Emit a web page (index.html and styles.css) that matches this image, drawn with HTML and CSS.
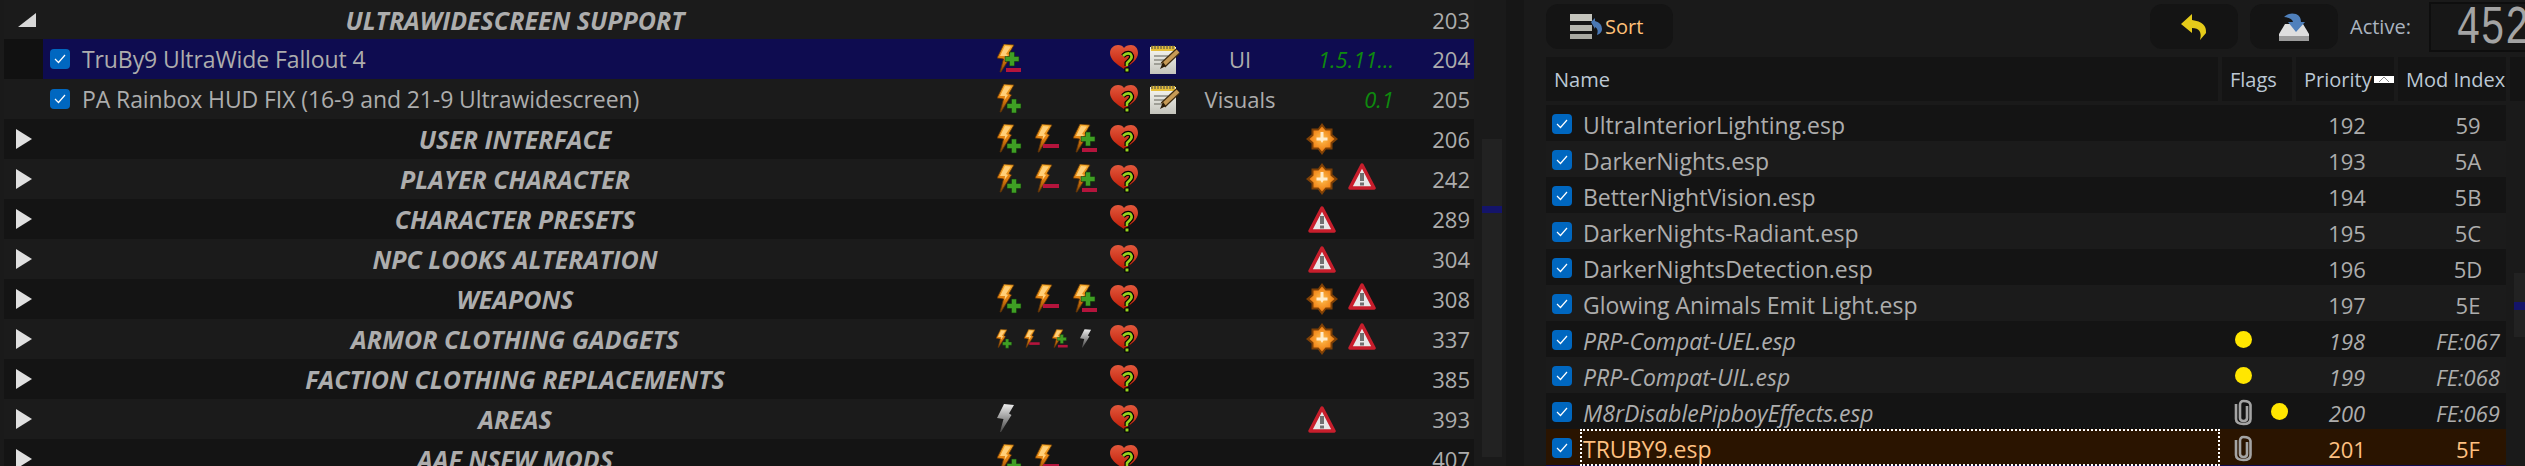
FILE: index.html
```html
<!DOCTYPE html>
<html lang="en">
<head>
    <meta charset="UTF-8">
    <title>Mod Organizer</title>
    <link rel="stylesheet" href="styles.css">
</head>
<body>

    <!-- shared icons -->
    <svg class="defs" width="0" height="0">
        <defs>
            <linearGradient id="boltFill" x1="0" y1="0" x2="0" y2="1">
                <stop offset="0" stop-color="#f8b030"/>
                <stop offset="0.55" stop-color="#e07c0c"/>
                <stop offset="1" stop-color="#7e4206"/>
            </linearGradient>
            <linearGradient id="greyFill" x1="0" y1="0" x2="0" y2="1">
                <stop offset="0" stop-color="#eeeeee"/>
                <stop offset="1" stop-color="#444444"/>
            </linearGradient>
            <linearGradient id="heartFill" x1="0" y1="0" x2="0" y2="1">
                <stop offset="0" stop-color="#e2583c"/>
                <stop offset="1" stop-color="#c01d08"/>
            </linearGradient>
            <linearGradient id="pageFill" x1="0" y1="0" x2="0" y2="1">
                <stop offset="0" stop-color="#f8f8f2"/>
                <stop offset="1" stop-color="#c4c4bc"/>
            </linearGradient>
            <radialGradient id="sunFill">
                <stop offset="0" stop-color="#ffc050"/>
                <stop offset="1" stop-color="#ee7c10"/>
            </radialGradient>
            <g id="boltShape">
                <path d="M7 0 17 1 12 9.500 14.500 11 4 28 3 28 6.500 15 0 14Z" fill="url(#boltFill)" stroke="#5e3206" stroke-width=".8"/>
                <path d="M8 2 14 2.500 9 10 11 11 7.500 16 8 12 3 12Z" fill="#ffcf78"/>
            </g>
            <symbol id="i-bolt-plus" viewBox="0 0 26 30">
                <use href="#boltShape"/>
                <path d="M14.500 15h5v4.500H24v5h-4.500V29h-5v-4.500H10v-5h4.500Z" fill="#3f9f24" stroke="#12330c" stroke-width=".6"/>
            </symbol>
            <symbol id="i-bolt-minus" viewBox="0 0 26 30">
                <use href="#boltShape"/>
                <rect x="8" y="20" width="16" height="4" fill="#b4143c"/>
            </symbol>
            <symbol id="i-bolt-both" viewBox="0 0 26 30">
                <use href="#boltShape"/>
                <path d="M12.500 8h5v4.500H22v5h-4.500V22h-5v-4.500H8v-5h4.500Z" fill="#3f9f24" stroke="#12330c" stroke-width=".6"/>
                <rect x="9" y="24" width="15" height="4" fill="#b4143c"/>
            </symbol>
            <symbol id="i-bolt-grey" viewBox="0 0 26 30">
                <path d="M7 0 17 1 12 9.500 14.500 11 4 28 3 28 6.500 15 0 14Z" fill="url(#greyFill)"/>
            </symbol>
            <symbol id="i-heart" viewBox="0 0 28 28">
                <path d="M14 24C6 19 0 14 0 8 0 3 4 0 8 0c3 0 5 1 6 3 1-2 4-3 7-3 4 0 7 3 7 8 0 6-6 11-14 16Z" fill="url(#heartFill)"/>
                <path d="M13 11Q17 7 20.500 9 23 12 20 15L17 18V21" fill="none" stroke="#000" stroke-width="5"/>
                <path d="M13 11Q17 7 20.500 9 23 12 20 15L17 18V21" fill="none" stroke="#96d21e" stroke-width="2.600"/>
                <rect x="14.500" y="22.500" width="5" height="5" fill="#000"/>
                <rect x="15.500" y="23.500" width="3" height="3" fill="#96d21e"/>
            </symbol>
            <symbol id="i-note" viewBox="0 0 30 30">
                <rect x="0" y="3" width="26" height="27" fill="url(#pageFill)"/>
                <rect x="1" y="2" width="24" height="5" fill="#e6bf3a"/>
                <path d="M2 1v4M5 1v4M8 1v4M11 1v4M14 1v4M17 1v4M20 1v4M23 1v4" stroke="#444" stroke-width="1"/>
                <path d="M4 12h14M4 16h10M4 20h8" stroke="#8c8c84" stroke-width="1.500"/>
                <path d="M28 7 13 21" stroke="#3c2a10" stroke-width="6.500"/>
                <path d="M28 7 13 21" stroke="#c69a55" stroke-width="4"/>
                <path d="M13 18 16 22 10 25Z" fill="#2a1c08"/>
            </symbol>
            <symbol id="i-sun" viewBox="0 0 32 32">
                <path d="M16 0 20 5.500 26.500 5.500 26.500 11.500 32 16 26.500 20.500 26.500 26.500 20 26.500 16 32 12 26.500 5.500 26.500 5.500 20.500 0 16 5.500 11.500 5.500 5.500 12 5.500Z" fill="#7e4006"/>
                <path d="M16 3.500 19.500 7.500 24.500 7.500 24.500 12.500 28.500 16 24.500 19.500 24.500 24.500 19.500 24.500 16 28.500 12.500 24.500 7.500 24.500 7.500 19.500 3.500 16 7.500 12.500 7.500 7.500 12.500 7.500Z" fill="url(#sunFill)"/>
                <path d="M14.500 9h3v5.500h4v3h-4l-1.500 2.500-1.500-2.500h-4v-3h4Z" fill="#ffeccc"/>
            </symbol>
            <symbol id="i-warn" viewBox="0 0 28 27">
                <path d="M14 2 26 25H2Z" fill="#e8e8e8" stroke="#c81e2c" stroke-width="3.500" stroke-linejoin="round"/>
                <rect x="12" y="10" width="4" height="8" fill="#707070"/>
                <rect x="12" y="19.500" width="4" height="3" fill="#707070"/>
            </symbol>
            <symbol id="i-clip" viewBox="0 0 21 28">
                <path d="M14 8V20Q14 23 10.500 23 7 23 7 20V7Q7 3 10.500 3 17 3 17.500 7V21Q17.500 26 10.500 26 3 26 3 21V6" fill="none" stroke="#a4a4a4" stroke-width="2.600"/>
            </symbol>
        </defs>
    </svg>

    <div class="app">

        <!-- mod list -->
        <div class="left-pane">
            <div class="tree">
                <div class="tree-row light first">
                    <div class="arrow-cell"><svg class="arrow" width="20" height="14" viewBox="0 0 20 14"><path d="M20 0V14H2Z" fill="#d8d8d8"/></svg></div>
                    <div class="group-title">ULTRAWIDESCREEN SUPPORT</div>
                    <div class="flags-cell"></div><div class="conflict-cell"></div><div class="note-cell"></div><div class="category"></div><div class="badges"></div>
                    <div class="priority">203</div>
                </div>
                <div class="tree-row selected">
                    <div class="arrow-cell current"></div>
                    <div class="mod-title"><span class="check"><svg width="12" height="10" viewBox="0 0 12 10"><path d="M1 5 4.500 8.500 11 1" fill="none" stroke="#fff" stroke-width="1.200"/></svg></span>TruBy9 UltraWide Fallout 4</div>
                    <div class="flags-cell"><svg class="icon-flag"><use href="#i-bolt-both"/></svg></div>
                    <div class="conflict-cell"><svg class="icon-heart"><use href="#i-heart"/></svg></div>
                    <div class="note-cell"><svg class="icon-note"><use href="#i-note"/></svg></div>
                    <div class="category">UI</div>
                    <div class="version">1.5.11...</div>
                    <div class="priority">204</div>
                </div>
                <div class="tree-row light">
                    <div class="arrow-cell"></div>
                    <div class="mod-title"><span class="check"><svg width="12" height="10" viewBox="0 0 12 10"><path d="M1 5 4.500 8.500 11 1" fill="none" stroke="#fff" stroke-width="1.200"/></svg></span>PA Rainbox HUD FIX (16-9 and 21-9 Ultrawidescreen)</div>
                    <div class="flags-cell"><svg class="icon-flag"><use href="#i-bolt-plus"/></svg></div>
                    <div class="conflict-cell"><svg class="icon-heart"><use href="#i-heart"/></svg></div>
                    <div class="note-cell"><svg class="icon-note"><use href="#i-note"/></svg></div>
                    <div class="category">Visuals</div>
                    <div class="version">0.1</div>
                    <div class="priority">205</div>
                </div>
                <div class="tree-row dark">
                    <div class="arrow-cell"><svg class="arrow" width="16" height="20" viewBox="0 0 16 20"><path d="M0 0 16 10 0 20Z" fill="#e0e0e0"/></svg></div>
                    <div class="group-title">USER INTERFACE</div>
                    <div class="flags-cell"><svg class="icon-flag"><use href="#i-bolt-plus"/></svg><svg class="icon-flag"><use href="#i-bolt-minus"/></svg><svg class="icon-flag"><use href="#i-bolt-both"/></svg></div>
                    <div class="conflict-cell"><svg class="icon-heart"><use href="#i-heart"/></svg></div>
                    <div class="note-cell"></div><div class="category"></div>
                    <div class="badges"><span class="slot"><svg class="icon-sun"><use href="#i-sun"/></svg></span></div>
                    <div class="priority">206</div>
                </div>
                <div class="tree-row light">
                    <div class="arrow-cell"><svg class="arrow" width="16" height="20" viewBox="0 0 16 20"><path d="M0 0 16 10 0 20Z" fill="#e0e0e0"/></svg></div>
                    <div class="group-title">PLAYER CHARACTER</div>
                    <div class="flags-cell"><svg class="icon-flag"><use href="#i-bolt-plus"/></svg><svg class="icon-flag"><use href="#i-bolt-minus"/></svg><svg class="icon-flag"><use href="#i-bolt-both"/></svg></div>
                    <div class="conflict-cell"><svg class="icon-heart"><use href="#i-heart"/></svg></div>
                    <div class="note-cell"></div><div class="category"></div>
                    <div class="badges"><span class="slot"><svg class="icon-sun"><use href="#i-sun"/></svg></span><span class="slot"><svg class="icon-warn"><use href="#i-warn"/></svg></span></div>
                    <div class="priority">242</div>
                </div>
                <div class="tree-row dark">
                    <div class="arrow-cell"><svg class="arrow" width="16" height="20" viewBox="0 0 16 20"><path d="M0 0 16 10 0 20Z" fill="#e0e0e0"/></svg></div>
                    <div class="group-title">CHARACTER PRESETS</div>
                    <div class="flags-cell"></div>
                    <div class="conflict-cell"><svg class="icon-heart"><use href="#i-heart"/></svg></div>
                    <div class="note-cell"></div><div class="category"></div>
                    <div class="badges"><span class="slot"><svg class="icon-warn"><use href="#i-warn"/></svg></span></div>
                    <div class="priority">289</div>
                </div>
                <div class="tree-row light">
                    <div class="arrow-cell"><svg class="arrow" width="16" height="20" viewBox="0 0 16 20"><path d="M0 0 16 10 0 20Z" fill="#e0e0e0"/></svg></div>
                    <div class="group-title">NPC LOOKS ALTERATION</div>
                    <div class="flags-cell"></div>
                    <div class="conflict-cell"><svg class="icon-heart"><use href="#i-heart"/></svg></div>
                    <div class="note-cell"></div><div class="category"></div>
                    <div class="badges"><span class="slot"><svg class="icon-warn"><use href="#i-warn"/></svg></span></div>
                    <div class="priority">304</div>
                </div>
                <div class="tree-row dark">
                    <div class="arrow-cell"><svg class="arrow" width="16" height="20" viewBox="0 0 16 20"><path d="M0 0 16 10 0 20Z" fill="#e0e0e0"/></svg></div>
                    <div class="group-title">WEAPONS</div>
                    <div class="flags-cell"><svg class="icon-flag"><use href="#i-bolt-plus"/></svg><svg class="icon-flag"><use href="#i-bolt-minus"/></svg><svg class="icon-flag"><use href="#i-bolt-both"/></svg></div>
                    <div class="conflict-cell"><svg class="icon-heart"><use href="#i-heart"/></svg></div>
                    <div class="note-cell"></div><div class="category"></div>
                    <div class="badges"><span class="slot"><svg class="icon-sun"><use href="#i-sun"/></svg></span><span class="slot"><svg class="icon-warn"><use href="#i-warn"/></svg></span></div>
                    <div class="priority">308</div>
                </div>
                <div class="tree-row light">
                    <div class="arrow-cell"><svg class="arrow" width="16" height="20" viewBox="0 0 16 20"><path d="M0 0 16 10 0 20Z" fill="#e0e0e0"/></svg></div>
                    <div class="group-title">ARMOR CLOTHING GADGETS</div>
                    <div class="flags-cell small"><svg class="icon-flag-small"><use href="#i-bolt-plus"/></svg><svg class="icon-flag-small"><use href="#i-bolt-minus"/></svg><svg class="icon-flag-small"><use href="#i-bolt-both"/></svg><svg class="icon-flag-small"><use href="#i-bolt-grey"/></svg></div>
                    <div class="conflict-cell"><svg class="icon-heart"><use href="#i-heart"/></svg></div>
                    <div class="note-cell"></div><div class="category"></div>
                    <div class="badges"><span class="slot"><svg class="icon-sun"><use href="#i-sun"/></svg></span><span class="slot"><svg class="icon-warn"><use href="#i-warn"/></svg></span></div>
                    <div class="priority">337</div>
                </div>
                <div class="tree-row dark">
                    <div class="arrow-cell"><svg class="arrow" width="16" height="20" viewBox="0 0 16 20"><path d="M0 0 16 10 0 20Z" fill="#e0e0e0"/></svg></div>
                    <div class="group-title">FACTION CLOTHING REPLACEMENTS</div>
                    <div class="flags-cell"></div>
                    <div class="conflict-cell"><svg class="icon-heart"><use href="#i-heart"/></svg></div>
                    <div class="note-cell"></div><div class="category"></div><div class="badges"></div>
                    <div class="priority">385</div>
                </div>
                <div class="tree-row light">
                    <div class="arrow-cell"><svg class="arrow" width="16" height="20" viewBox="0 0 16 20"><path d="M0 0 16 10 0 20Z" fill="#e0e0e0"/></svg></div>
                    <div class="group-title">AREAS</div>
                    <div class="flags-cell"><svg class="icon-flag"><use href="#i-bolt-grey"/></svg></div>
                    <div class="conflict-cell"><svg class="icon-heart"><use href="#i-heart"/></svg></div>
                    <div class="note-cell"></div><div class="category"></div>
                    <div class="badges"><span class="slot"><svg class="icon-warn"><use href="#i-warn"/></svg></span></div>
                    <div class="priority">393</div>
                </div>
                <div class="tree-row dark">
                    <div class="arrow-cell"><svg class="arrow" width="16" height="20" viewBox="0 0 16 20"><path d="M0 0 16 10 0 20Z" fill="#e0e0e0"/></svg></div>
                    <div class="group-title">AAF NSFW MODS</div>
                    <div class="flags-cell"><svg class="icon-flag"><use href="#i-bolt-plus"/></svg><svg class="icon-flag"><use href="#i-bolt-minus"/></svg></div>
                    <div class="conflict-cell"><svg class="icon-heart"><use href="#i-heart"/></svg></div>
                    <div class="note-cell"></div><div class="category"></div><div class="badges"></div>
                    <div class="priority">407</div>
                </div>
            </div>
            <div class="tree-scroll">
                <div class="scroll-thumb tree-thumb"><span class="scroll-mark tree-mark"></span></div>
            </div>
        </div>

        <div class="splitter"></div>

        <!-- plugin list -->
        <div class="right-pane">
            <div class="toolbar">
                <button class="tool-btn sort-btn">
                    <svg width="32" height="26" viewBox="0 0 32 26">
                        <rect x="0" y="0" width="22" height="7" fill="#c4c4bc"/>
                        <rect x="0" y="11" width="22" height="6" fill="#b4b4ac"/>
                        <rect x="0" y="20" width="22" height="5" fill="#a8a8a0"/>
                        <path d="M21 8 25 4 25 7Q32 9 32 15 32 19 27 21 29 15 25 13V15Z" fill="#4a78b4"/>
                    </svg>
                    Sort
                </button>
                <button class="tool-btn undo-btn">
                    <svg width="26" height="26" viewBox="0 0 26 26"><path d="M0 10 11 0V6Q26 8 25 19L19 26Q22 14 11 14V19Z" fill="#e6cc1a"/></svg>
                </button>
                <button class="tool-btn">
                    <svg width="30" height="28" viewBox="0 0 30 28">
                        <path d="M6 11H24L30 21V28H0V21Z" fill="#dedede"/>
                        <rect x="0" y="23" width="30" height="5" fill="#9c9c9c"/>
                        <path d="M5 4Q10 -1 17 1 22 3 22 9H26L17 19 9 9H14Q13 5 5 4Z" fill="#4f80bc"/>
                    </svg>
                </button>
                <span class="active-label">Active:</span>
                <div class="lcd"><span class="lcd-value">452</span></div>
            </div>

            <div class="plugin-head">
                <div class="head-cell">Name</div>
                <div class="head-cell">Flags</div>
                <div class="head-cell priority-head">Priority<span class="sort-mark"><svg width="10" height="5" viewBox="0 0 10 5"><path d="M0 5 5 0 10 5" fill="none" stroke="#888" stroke-width="1"/></svg></span></div>
                <div class="head-cell">Mod Index</div>
                <div class="head-cell"></div>
            </div>

            <div class="plugin-body">
                <div class="plugin-list">
                    <div class="plugin-row dark">
                        <div class="plugin-name"><span class="check"><svg width="12" height="10" viewBox="0 0 12 10"><path d="M1 5 4.500 8.500 11 1" fill="none" stroke="#fff" stroke-width="1.200"/></svg></span><span class="plugin-text">UltraInteriorLighting.esp</span></div>
                        <div class="plugin-flags"></div><div class="plugin-priority">192</div><div class="plugin-index">59</div>
                    </div>
                    <div class="plugin-row light">
                        <div class="plugin-name"><span class="check"><svg width="12" height="10" viewBox="0 0 12 10"><path d="M1 5 4.500 8.500 11 1" fill="none" stroke="#fff" stroke-width="1.200"/></svg></span><span class="plugin-text">DarkerNights.esp</span></div>
                        <div class="plugin-flags"></div><div class="plugin-priority">193</div><div class="plugin-index">5A</div>
                    </div>
                    <div class="plugin-row dark">
                        <div class="plugin-name"><span class="check"><svg width="12" height="10" viewBox="0 0 12 10"><path d="M1 5 4.500 8.500 11 1" fill="none" stroke="#fff" stroke-width="1.200"/></svg></span><span class="plugin-text">BetterNightVision.esp</span></div>
                        <div class="plugin-flags"></div><div class="plugin-priority">194</div><div class="plugin-index">5B</div>
                    </div>
                    <div class="plugin-row light">
                        <div class="plugin-name"><span class="check"><svg width="12" height="10" viewBox="0 0 12 10"><path d="M1 5 4.500 8.500 11 1" fill="none" stroke="#fff" stroke-width="1.200"/></svg></span><span class="plugin-text">DarkerNights-Radiant.esp</span></div>
                        <div class="plugin-flags"></div><div class="plugin-priority">195</div><div class="plugin-index">5C</div>
                    </div>
                    <div class="plugin-row dark">
                        <div class="plugin-name"><span class="check"><svg width="12" height="10" viewBox="0 0 12 10"><path d="M1 5 4.500 8.500 11 1" fill="none" stroke="#fff" stroke-width="1.200"/></svg></span><span class="plugin-text">DarkerNightsDetection.esp</span></div>
                        <div class="plugin-flags"></div><div class="plugin-priority">196</div><div class="plugin-index">5D</div>
                    </div>
                    <div class="plugin-row light">
                        <div class="plugin-name"><span class="check"><svg width="12" height="10" viewBox="0 0 12 10"><path d="M1 5 4.500 8.500 11 1" fill="none" stroke="#fff" stroke-width="1.200"/></svg></span><span class="plugin-text">Glowing Animals Emit Light.esp</span></div>
                        <div class="plugin-flags"></div><div class="plugin-priority">197</div><div class="plugin-index">5E</div>
                    </div>
                    <div class="plugin-row dark light-plugin">
                        <div class="plugin-name"><span class="check"><svg width="12" height="10" viewBox="0 0 12 10"><path d="M1 5 4.500 8.500 11 1" fill="none" stroke="#fff" stroke-width="1.200"/></svg></span><span class="plugin-text">PRP-Compat-UEL.esp</span></div>
                        <div class="plugin-flags"><span class="flag-slot"><span class="dot"></span></span></div><div class="plugin-priority">198</div><div class="plugin-index">FE:067</div>
                    </div>
                    <div class="plugin-row light light-plugin">
                        <div class="plugin-name"><span class="check"><svg width="12" height="10" viewBox="0 0 12 10"><path d="M1 5 4.500 8.500 11 1" fill="none" stroke="#fff" stroke-width="1.200"/></svg></span><span class="plugin-text">PRP-Compat-UIL.esp</span></div>
                        <div class="plugin-flags"><span class="flag-slot"><span class="dot"></span></span></div><div class="plugin-priority">199</div><div class="plugin-index">FE:068</div>
                    </div>
                    <div class="plugin-row dark light-plugin">
                        <div class="plugin-name"><span class="check"><svg width="12" height="10" viewBox="0 0 12 10"><path d="M1 5 4.500 8.500 11 1" fill="none" stroke="#fff" stroke-width="1.200"/></svg></span><span class="plugin-text">M8rDisablePipboyEffects.esp</span></div>
                        <div class="plugin-flags"><span class="flag-slot"><svg class="icon-clip"><use href="#i-clip"/></svg></span><span class="flag-slot"><span class="dot"></span></span></div><div class="plugin-priority">200</div><div class="plugin-index">FE:069</div>
                    </div>
                    <div class="plugin-row current-plugin">
                        <div class="plugin-name"><span class="check"><svg width="12" height="10" viewBox="0 0 12 10"><path d="M1 5 4.500 8.500 11 1" fill="none" stroke="#fff" stroke-width="1.200"/></svg></span><span class="plugin-text">TRUBY9.esp</span></div>
                        <div class="plugin-flags"><span class="flag-slot"><svg class="icon-clip"><use href="#i-clip"/></svg></span></div><div class="plugin-priority">201</div><div class="plugin-index">5F</div>
                    </div>
                </div>
                <div class="plugin-scroll">
                    <div class="scroll-thumb plugin-thumb"><span class="scroll-mark plugin-mark"></span></div>
                </div>
            </div>
        </div>
    </div>

</body>
</html>
```

FILE: styles.css
```css
body {
    margin: 0;
    background-color: #1a1a1a;
    color: #adadad;
    font-family: "Open Sans", "Noto Sans", sans-serif;
    font-size: 23px;
}
.defs {
    position: absolute;
}
svg {
    display: block;
}
.app {
    display: flex;
    height: 466px;
    overflow: hidden;
}

/* Left side */
.left-pane {
    display: flex;
    width: 1502px;
    padding-left: 4px;
    flex-shrink: 0;
}
.tree {
    width: 1470px;
    flex-shrink: 0;
}
.tree-row {
    display: grid;
    grid-template-columns: 39px 944px 118px 45px 30px 120px 94px 80px;
    height: 40px;
    align-items: center;
}
.tree-row.first {
    height: 39px;
}
.light {
    background-color: #1b1b1b;
}
.dark {
    background-color: #141414;
}
.selected {
    background-color: #0e0c50;
}
.arrow-cell {
    height: 100%;
    display: flex;
    align-items: center;
    padding-left: 12px;
}
.arrow-cell.current {
    background-color: #111111;
}
.group-title {
    text-align: center;
    font-size: 25px;
    font-weight: bold;
    font-style: italic;
    white-space: nowrap;
}
.mod-title {
    display: flex;
    align-items: center;
    padding-left: 7px;
    letter-spacing: -.1px;
    white-space: nowrap;
}
.check {
    display: flex;
    align-items: center;
    justify-content: center;
    width: 20px;
    height: 20px;
    margin-right: 12px;
    border-radius: 4px;
    background-color: #0067c0;
    flex-shrink: 0;
}
.flags-cell {
    display: flex;
    gap: 12px;
    padding-left: 10px;
}
.flags-cell.small {
    gap: 11px;
    padding-left: 9px;
}
.icon-flag {
    width: 26px;
    height: 30px;
}
.icon-flag-small {
    width: 17px;
    height: 20px;
}
.conflict-cell {
    padding-left: 5px;
}
.icon-heart {
    width: 28px;
    height: 28px;
}
.icon-note {
    width: 30px;
    height: 30px;
}
.category {
    text-align: center;
    font-size: 22px;
}
.version {
    text-align: right;
    font-size: 22px;
    font-style: italic;
    color: #0e8a0e;
}
.badges {
    display: flex;
    gap: 9px;
    padding-left: 6px;
}
.slot {
    display: flex;
    justify-content: center;
    width: 31px;
}
.icon-sun {
    width: 32px;
    height: 32px;
    flex-shrink: 0;
}
.icon-warn {
    width: 28px;
    height: 27px;
}
.priority {
    text-align: right;
    padding-right: 4px;
    font-size: 22px;
}

/* Scrollbars */
.tree-scroll {
    width: 20px;
    margin-left: 8px;
}
.scroll-thumb {
    position: relative;
    background-color: #222222;
}
.tree-thumb {
    margin-top: 139px;
    height: 318px;
}
.scroll-mark {
    position: absolute;
    left: 0;
    right: 0;
    background-color: #14146a;
}
.tree-mark {
    top: 67px;
    height: 7px;
}
.splitter {
    width: 18px;
    flex-shrink: 0;
    background-color: #161616;
}

/* Right side */
.right-pane {
    flex: 1;
    padding-left: 22px;
}
.toolbar {
    display: flex;
    align-items: flex-start;
    height: 55px;
    padding-top: 2px;
    font-size: 20px;
}
.tool-btn {
    display: flex;
    align-items: center;
    justify-content: center;
    width: 88px;
    height: 45px;
    margin: 2px 12px 0 0;
    padding: 0;
    border: none;
    border-radius: 12px;
    background-color: #141414;
    color: #ffc078;
    font-family: inherit;
    font-size: 20px;
}
.sort-btn {
    width: 127px;
    justify-content: flex-start;
    padding-left: 24px;
    gap: 3px;
    margin-right: 0;
}
.undo-btn {
    margin-left: auto;
}
.active-label {
    margin-top: 11px;
    width: 79px;
    color: #aab4c0;
}
.lcd {
    display: flex;
    justify-content: flex-end;
    width: 98px;
    height: 46px;
    border: 2px solid #0e0e0e;
    border-right: none;
    background-color: #171717;
    color: #a4a4a4;
}
.lcd-value {
    font-family: "Liberation Mono", monospace;
    font-size: 54px;
    line-height: 50px;
    transform: scaleX(.75);
    transform-origin: right center;
}
.plugin-head {
    display: grid;
    grid-template-columns: 672px 70px 98px 108px 19px;
    gap: 4px;
    height: 44px;
    margin-bottom: 4px;
    color: #bcc8d4;
    font-size: 20px;
}
.head-cell {
    display: flex;
    align-items: center;
    padding-left: 8px;
    background-color: #141414;
    overflow: hidden;
    white-space: nowrap;
}
.priority-head {
    position: relative;
}
.sort-mark {
    position: absolute;
    right: 0;
    display: flex;
    align-items: center;
    justify-content: center;
    width: 20px;
    height: 7px;
    background-color: #fff;
}
.plugin-body {
    display: flex;
}
.plugin-list {
    width: 960px;
    border-bottom: 1px solid #0e0c50;
}
.plugin-row {
    display: grid;
    grid-template-columns: 676px 74px 102px 108px;
    height: 36px;
    align-items: center;
}
.plugin-name {
    display: flex;
    align-items: center;
    height: 100%;
    padding: 0 2px 0 6px;
    box-sizing: border-box;
}
.plugin-name .check {
    margin-right: 8px;
}
.plugin-text {
    flex: 1;
    display: flex;
    align-items: center;
    height: 31px;
    padding-top: 2px;
    padding-left: 1px;
    border: 2px dotted transparent;
}
.plugin-flags {
    display: flex;
    align-items: center;
    gap: 15px;
    padding-left: 11px;
}
.flag-slot {
    display: flex;
    justify-content: center;
    width: 21px;
}
.dot {
    width: 17px;
    height: 17px;
    border-radius: 50%;
    background-color: #ffe600;
}
.icon-clip {
    width: 21px;
    height: 28px;
}
.plugin-priority {
    text-align: center;
    font-size: 22px;
    padding-top: 2px;
}
.plugin-index {
    padding-left: 32px;
    padding-top: 2px;
    text-align: center;
    font-size: 22px;
}
.light-plugin .plugin-text,
.light-plugin .plugin-priority,
.light-plugin .plugin-index {
    font-style: italic;
}
.current-plugin {
    background-color: #2a1400;
    color: #ffc080;
}
.current-plugin .plugin-text {
    border-color: #ffffff;
}
.plugin-scroll {
    width: 15px;
    margin-left: 8px;
}
.plugin-thumb {
    margin-top: 168px;
    height: 64px;
}
.plugin-mark {
    top: 29px;
    height: 8px;
}
```
